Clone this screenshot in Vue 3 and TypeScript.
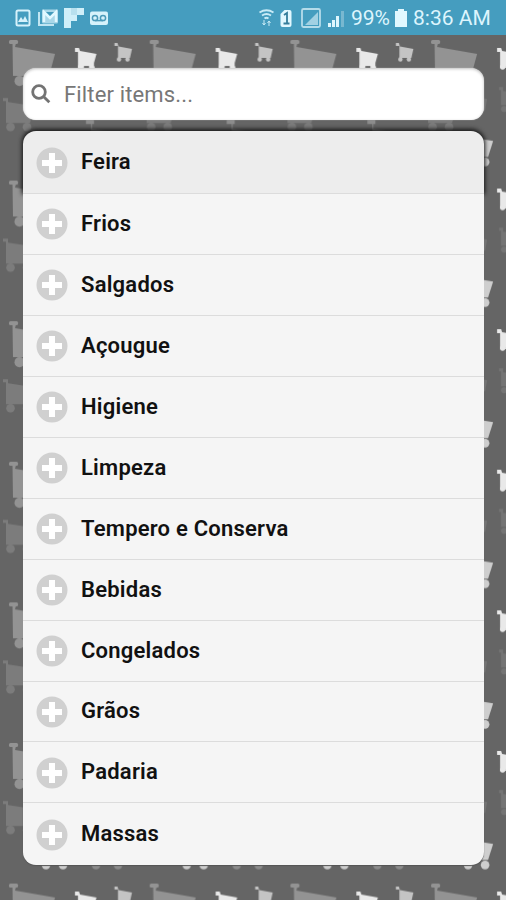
<script setup lang="ts">
const categories: string[] = [
  'Feira', 'Frios', 'Salgados', 'Açougue', 'Higiene', 'Limpeza',
  'Tempero e Conserva', 'Bebidas', 'Congelados', 'Grãos', 'Padaria', 'Massas',
]
</script>

<template>
  <div class="screen">
    <svg class="wallpaper" width="506" height="900" aria-hidden="true">
      <defs>
        <pattern id="carts" width="140.7" height="140.6" patternUnits="userSpaceOnUse" patternTransform="translate(0 35)">
          <g fill="#939393">
            <rect x="9" y="5" width="9" height="4" rx="1.500" />
            <path d="M12.500 8h3.500l-1 4 40 7-6 22H13z" />
            <circle cx="19.500" cy="46" r="5" /><circle cx="44" cy="46" r="5" />
          </g>
          <g fill="#e9e9e9">
            <path d="M75 13h4l1 3 16.500 3-2.500 9v3l1 2H78V17h-3z" />
            <circle cx="80.500" cy="32" r="2.600" /><circle cx="91.500" cy="32" r="2.600" />
            <path d="M84 34v-3h5v3z" fill="#666" />
          </g>
          <g fill="#c4c4c4">
            <path d="M114.500 8h3l1 3.500L132 14l-2 9h-12V11h-3.500z" />
            <circle cx="119" cy="24.500" r="2.200" /><circle cx="127.500" cy="24.500" r="2.200" />
          </g>
          <g fill="#7c7c7c">
            <path d="M3 63h5v4l26 4-4 17H6V66H3z" />
            <circle cx="10.500" cy="92" r="4.300" /><circle cx="27" cy="92" r="4.300" />
          </g>
          <g fill="#747474">
            <path d="M77 52h4v4l15 2-2 12H79V55h-2z" />
            <circle cx="82" cy="74" r="3" /><circle cx="92" cy="74" r="3" />
            <path d="M46 60l19 4-2 11H47z" />
          </g>
          <g fill="#cecece">
            <path d="M40 101l31 5-5 16H43z" />
            <circle cx="46" cy="127" r="4.300" /><circle cx="63" cy="127" r="4.300" />
          </g>
          <g fill="#8c8c8c">
            <path d="M86 85h8v4h-2v5l34 5-4 22H91V89h-5z" />
            <circle cx="96" cy="127" r="4.300" /><circle cx="118" cy="127" r="4.300" />
          </g>
        </pattern>
      </defs>
      <rect width="506" height="900" fill="#656565" />
      <rect width="506" height="900" fill="url(#carts)" />
    </svg>

    <header class="status">
      <svg class="notices" width="110" height="35" viewBox="0 0 110 35" aria-hidden="true">
        <rect x="16.500" y="10.500" width="13" height="15" rx="1.500" fill="none" stroke="#d6f2fb" stroke-width="2" />
        <path d="M18 22l3-5 2 3 2-4 3 6z" fill="#d6f2fb" />
        <path d="M39 12v13h15" fill="none" stroke="#c0e5f2" stroke-width="2" />
        <rect x="42" y="9.500" width="16" height="14" rx="1.500" fill="#a9d7e8" />
        <path d="M44 22V12l6 6 6-6v10" fill="none" stroke="#e2f8ff" stroke-width="2.500" />
        <path d="M46 12l4 4 4-4z" fill="#439abb" />
        <path d="M64 8h20v7h-7v6h-6v7h-7z" fill="#d0eff9" />
        <path d="M71 8h6v7h-6z" fill="#b8e0ee" />
        <rect x="90" y="11.500" width="18" height="13.500" rx="2" fill="#d6f2fb" />
        <circle cx="95" cy="18" r="2.600" fill="none" stroke="#4b9ab9" stroke-width="1.500" />
        <circle cx="103" cy="18" r="2.600" fill="none" stroke="#4b9ab9" stroke-width="1.500" />
        <path d="M95 20.600h8" stroke="#4b9ab9" stroke-width="1.500" />
      </svg>
      <div class="readings">
        <svg width="88" height="35" viewBox="0 0 88 35" aria-hidden="true">
          <g fill="none" stroke="#c9ebf6" stroke-width="1.800">
            <path d="M0.500 12.500q7-4.500 14 0M3 15.500q4.500-3 9 0M5.500 18.500q2-1.500 4 0" />
            <path d="M5 20v5M3.500 23l1.500 2 1.500-2M10 26v-5M8.500 23l1.500-2 1.500 2" stroke-width="1" />
          </g>
          <path d="M25 10h5q2 0 2 2v13q0 2-2 2h-7q-2 0-2-2V14z" transform="translate(.5 0)" fill="#e1f8ff" />
          <path d="M25 15l3-2v11M24.500 23.500h6" fill="none" stroke="#347d9b" stroke-width="1.800" />
          <rect x="43" y="9" width="18" height="18" rx="1.500" fill="none" stroke="#b5dcea" stroke-width="1.800" />
          <path d="M46 25L59 12v13z" fill="#a2d1e3" />
          <path d="M69 27v-4h3v4zM73 27v-7h3v7zM77 27V16h3v11z" fill="#def6fd" />
          <path d="M82 27V11h3v16z" fill="#78b8d0" />
        </svg>
        <span class="percent">99%</span>
        <svg class="battery" width="12" height="35" viewBox="0 0 12 35" aria-hidden="true">
          <path d="M3 9h6v2h3v16H0V11h3z" fill="#e1f8ff" />
        </svg>
        <span class="clock">8:36 AM</span>
      </div>
    </header>

    <main>
      <label class="search">
        <svg width="20" height="20" viewBox="0 0 20 20" aria-hidden="true">
          <circle cx="8" cy="8" r="6.300" /><path d="M12.500 12.500l5.800 5.800" />
        </svg>
        <input type="text" placeholder="Filter items..." aria-label="Filter items" />
      </label>
      <ul class="list">
        <li v-for="name in categories" :key="name">
          <svg width="32" height="32" viewBox="0 0 32 32" aria-hidden="true">
            <circle cx="16" cy="16" r="15.500" fill="#d0d0d0" />
            <path d="M13 6h6v7h7v6h-7v7h-6v-7H6v-6h7z" fill="#fff" />
          </svg>
          <span>{{ name }}</span>
        </li>
      </ul>
    </main>
  </div>
</template>

<style>
body { margin: 0; overflow: hidden; }
</style>

<style scoped>
.screen { position: relative; width: 506px; height: 900px; overflow: hidden; font-family: Roboto, "Liberation Sans", sans-serif; }
.wallpaper { position: absolute; inset: 0; }
.status { position: relative; display: flex; justify-content: space-between; height: 34.500px; background: #459dbf; color: #ddf5fd; overflow: hidden; margin-bottom: .5px; }
.readings { display: flex; align-items: center; width: 247px; font-size: 21px; line-height: 35px; white-space: nowrap; }
.readings svg { flex: none; }
.percent { width: 44px; padding-top: 3px; padding-left: 5px; box-sizing: border-box; flex: none; margin-left: -1px; }
.battery { margin-left: 5px; }
.clock { margin-left: 6px; padding-top: 3px; }
main { position: relative; padding: 33px 22px 0 23px; }
.search { display: flex; align-items: center; height: 52px; box-sizing: border-box; padding-left: 8px; background: #fff; border-radius: 13px; box-shadow: 0 0 1px #ddd, inset 0 1px 3px rgba(0,0,0,.25); }
.search svg { fill: none; stroke: #737373; stroke-width: 2.8; flex: none; }
.search input { min-width: 0; flex: 1; border: 0; outline: 0; padding: 0; margin-left: 13px; background: transparent; font: 22px Roboto, sans-serif; letter-spacing: .15px; color: #333; }
.search input::placeholder { color: #777; opacity: 1; }
.list { list-style: none; padding: 0; margin: 11px 0 0; }
li { position: relative; display: flex; align-items: center; height: 60.95px; box-sizing: border-box; padding-left: 13px; padding-top: 1px; background: #f5f5f5; border-bottom: 1.5px solid #dcdcdc; color: #111; font-size: 22px; line-height: 28px; font-weight: 600; }
li:first-child { height: 63px; background: #ededed; border-radius: 13px 13px 0 0; box-shadow: 0 -1px 4px 1px #181818; }
li:last-child { height: 62px; border-bottom: 0; border-radius: 0 0 13px 13px; box-shadow: 0 1px 1px #555; }
li svg { flex: none; }
li span { margin-left: 13px; margin-top: -1px; letter-spacing: .22px; }
</style>
